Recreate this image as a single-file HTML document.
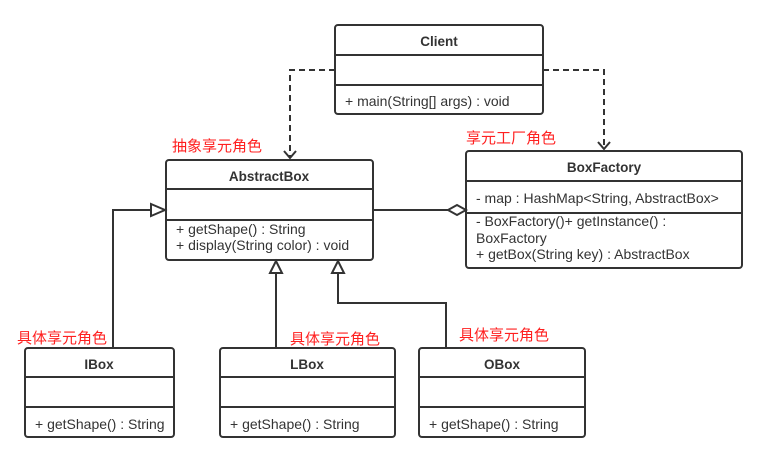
<!DOCTYPE html>
<html><head><meta charset="utf-8"><style>
html,body{margin:0;padding:0;background:#fff;}
svg{display:block;}
text{font-family:"Liberation Sans","Noto Sans CJK SC",sans-serif;font-size:14px;fill:#333;}
.b{font-weight:bold;font-size:13.5px;}
.r{fill:#ff2020;font-size:15px;}
</style></head><body>
<svg width="767" height="463" viewBox="0 0 767 463" xmlns="http://www.w3.org/2000/svg">
<g fill="#fff" stroke="#333" stroke-width="2">
<rect x="335" y="25" width="208" height="89" rx="3"/>
<line x1="335" y1="55" x2="543" y2="55"/><line x1="335" y1="85" x2="543" y2="85"/>
<rect x="166" y="160" width="207" height="100" rx="3"/>
<line x1="166" y1="189" x2="373" y2="189"/><line x1="166" y1="220" x2="373" y2="220"/>
<rect x="466" y="151" width="276" height="117" rx="3"/>
<line x1="466" y1="181" x2="742" y2="181"/><line x1="466" y1="213" x2="742" y2="213"/>
<rect x="25" y="348" width="149" height="89" rx="3"/>
<line x1="25" y1="377" x2="174" y2="377"/><line x1="25" y1="407" x2="174" y2="407"/>
<rect x="220" y="348" width="175" height="89" rx="3"/>
<line x1="220" y1="377" x2="395" y2="377"/><line x1="220" y1="407" x2="395" y2="407"/>
<rect x="419" y="348" width="166" height="89" rx="3"/>
<line x1="419" y1="377" x2="585" y2="377"/><line x1="419" y1="407" x2="585" y2="407"/>
</g>
<g fill="none" stroke="#333" stroke-width="2">
<path d="M335 70H290V158" stroke-dasharray="6,4"/>
<path d="M284 151L290 158L296 151"/>
<path d="M543 70H604V149" stroke-dasharray="6,4"/>
<path d="M598 142L604 149L610 142"/>
<path d="M373 210H448"/>
<path d="M448 210L457 205L466 210L457 215Z" fill="#fff"/>
<path d="M113 348V210H151"/>
<path d="M151 204L165 210L151 216Z" fill="#fff"/>
<path d="M276 348V273"/>
<path d="M270 273L276 261L282 273Z" fill="#fff"/>
<path d="M446 348V303H338V273"/>
<path d="M332 273L338 261L344 273Z" fill="#fff"/>
</g>
<text class="b" x="439" y="46" text-anchor="middle">Client</text>
<text x="345" y="106">+ main(String[] args) : void</text>
<text class="b" x="269" y="181" text-anchor="middle">AbstractBox</text>
<text x="176" y="234">+ getShape() : String</text>
<text x="176" y="250">+ display(String color) : void</text>
<text class="b" x="604" y="172" text-anchor="middle">BoxFactory</text>
<text x="476" y="203">- map : HashMap&lt;String, AbstractBox&gt;</text>
<text x="476" y="226">- BoxFactory()+ getInstance() :</text>
<text x="476" y="243">BoxFactory</text>
<text x="476" y="259">+ getBox(String key) : AbstractBox</text>
<text class="b" x="99" y="369" text-anchor="middle">IBox</text>
<text x="35" y="429">+ getShape() : String</text>
<text class="b" x="307" y="369" text-anchor="middle">LBox</text>
<text x="230" y="429">+ getShape() : String</text>
<text class="b" x="502" y="369" text-anchor="middle">OBox</text>
<text x="429" y="429">+ getShape() : String</text>
<text class="r" x="172" y="151">抽象享元角色</text>
<text class="r" x="466" y="143">享元工厂角色</text>
<text class="r" x="17" y="343">具体享元角色</text>
<text class="r" x="290" y="344">具体享元角色</text>
<text class="r" x="459" y="340">具体享元角色</text>
</svg>
</body></html>
